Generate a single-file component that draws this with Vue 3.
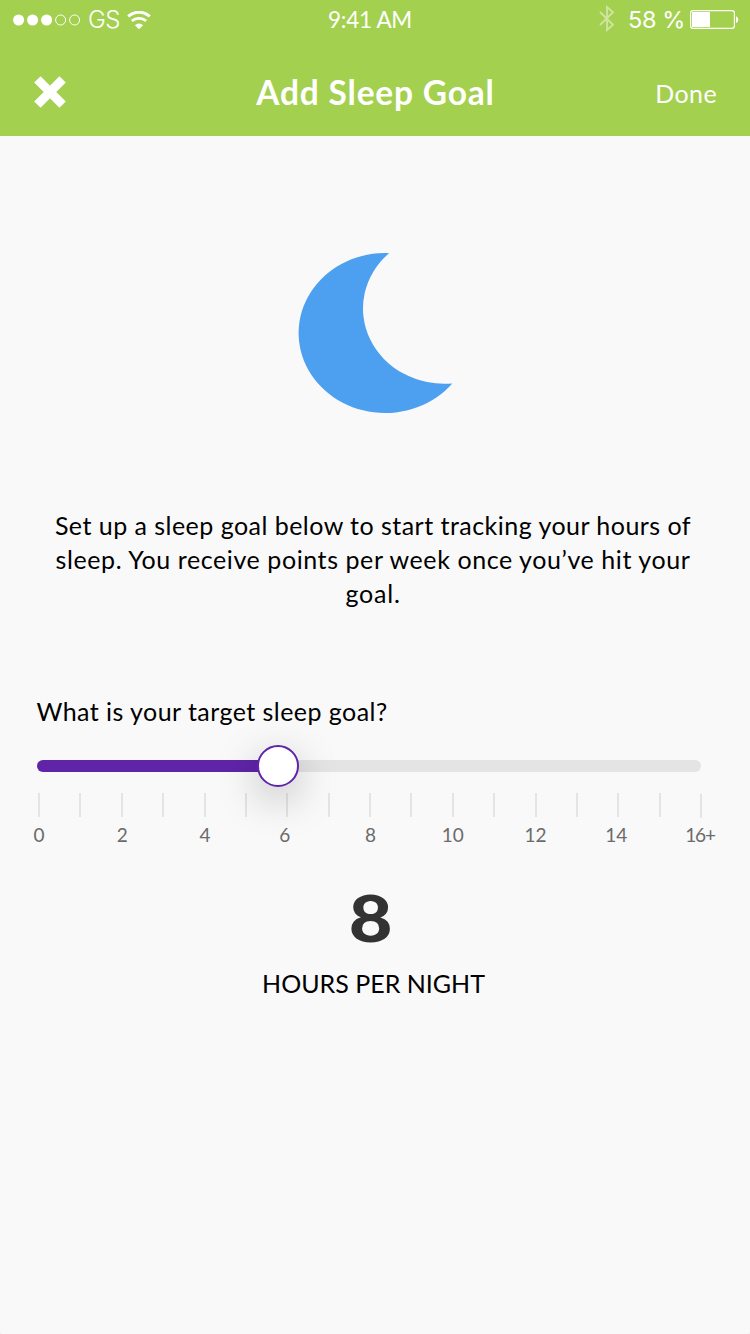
<script setup>
const signal = [true, true, true, false, false]
const ticks = Array.from({ length: 17 }, (_, i) => i)
const labels = [
  { text: '0', nudge: 0 },
  { text: '2', nudge: 0.5 },
  { text: '4', nudge: 0.5 },
  { text: '6', nudge: -2.5 },
  { text: '8', nudge: 0.5 },
  { text: '10', nudge: 0 },
  { text: '12', nudge: 0 },
  { text: '14', nudge: -2 },
  { text: '16+', nudge: -1 },
]
const progress = 36.3
</script>

<template>
  <div class="screen">
    <header class="top">
      <div class="status">
        <div class="carrier">
          <svg class="dots" width="68" height="12" viewBox="0 0 68 12">
            <circle
              v-for="(on, i) in signal"
              :key="i"
              :cx="5.6 + i * 14"
              cy="6"
              :r="on ? 5.5 : 5"
              :fill="on ? '#fff' : 'none'"
              :stroke="on ? 'none' : '#fff'"
            />
          </svg>
          <span class="network">GS</span>
          <svg class="wifi" width="24" height="19" viewBox="0 0 24 19">
            <path d="M1.2 5.4a16 16 0 0 1 21.6 0" fill="none" stroke="#fff" stroke-width="3" />
            <path d="M4.9 10.1a10.4 10.4 0 0 1 14.2 0" fill="none" stroke="#fff" stroke-width="2.8" />
            <path d="M12 18.3L7.9 14.2a5.9 5.9 0 0 1 8.2 0z" fill="#fff" />
          </svg>
        </div>
        <span class="time">9:41 AM</span>
        <div class="power">
          <svg class="bluetooth" width="16" height="27" viewBox="0 0 16 27">
            <path d="M1 7l13 12.8-6 5.2V2l6 5.2L1 20" fill="none" stroke="#fff" stroke-width="1.9" />
          </svg>
          <span class="percent">58 %</span>
          <svg class="battery" width="50" height="20" viewBox="0 0 50 20">
            <rect x=".6" y=".6" width="43.8" height="17.8" rx="2.4" fill="none" stroke="#fff" stroke-width="1.2" />
            <rect x="2" y="2" width="18" height="15" rx=".6" fill="#fff" />
            <path d="M46 6.2a3 3.5 0 0 1 0 6.8z" fill="#fff" />
          </svg>
        </div>
      </div>
      <nav class="bar">
        <svg class="close" width="32" height="32" viewBox="0 0 32 32">
          <path d="M3.4 3.4l25.2 25.2M28.6 3.4L3.4 28.6" stroke="#fff" stroke-width="9" />
        </svg>
        <h1 class="title">Add Sleep Goal</h1>
        <span class="done">Done</span>
      </nav>
    </header>

    <main class="content">
      <svg class="moon" width="156" height="162" viewBox="298 252 156 162">
        <path d="M389.2 253.1A86.5 80 0 1 0 452.3 383.4A81.3 75.3 0 0 1 389.2 253.1z" fill="#4d9ff0" />
      </svg>

      <p class="intro">
        <span class="l1">Set up a sleep goal below to start tracking your hours of</span>
        <span class="l2">sleep. You receive points per week once you’ve hit your</span>
        <span class="l3">goal.</span>
      </p>

      <section class="goal">
        <h2 class="question">What is your target sleep goal?</h2>
        <div class="track">
          <div class="fill" :style="{ width: progress + '%' }"></div>
          <div class="knob" :style="{ left: progress + '%' }"></div>
        </div>
        <div class="ticks"><i v-for="t in ticks" :key="t"></i></div>
        <div class="labels">
          <span v-for="l in labels" :key="l.text">
            <b :style="{ marginLeft: l.nudge * 2 + 'px' }">{{ l.text }}</b>
          </span>
        </div>
      </section>

      <div class="value">8</div>
      <div class="unit">HOURS PER NIGHT</div>
    </main>
  </div>
</template>

<style>
html {
  background: #efefef;
}
</style>

<style scoped>
.screen {
  width: 750px;
  height: 1334px;
  overflow: hidden;
  background: #f9f9f9;
  border-radius: 0 0 3px 3px;
  color: #000;
  font-family: Lato, "Liberation Sans", sans-serif;
}
.top {
  height: 136px;
  background: #a4d04f;
  color: #fff;
}
.status {
  height: 40px;
  display: grid;
  grid-template-columns: 1fr auto 1fr;
  align-items: center;
  padding: 0 10px 0 13px;
  line-height: 38px;
}
.time {
  margin-right: 13px;
  font-size: 22.5px;
  letter-spacing: -0.3px;
}
.carrier,
.power {
  display: flex;
  align-items: center;
}
.network {
  margin-left: 7px;
  font: 300 24px/38px Inter, sans-serif;
  letter-spacing: -0.6px;
}
.wifi {
  margin-left: 7px;
}
.power {
  justify-content: flex-end;
}
.bluetooth {
  margin-bottom: 3px;
  opacity: 0.45;
}
.percent {
  margin-left: 13px;
  font: 400 23.5px/38px Inter, sans-serif;
  letter-spacing: -0.4px;
}
.battery {
  margin-left: 5px;
}
.bar {
  height: 96px;
  display: grid;
  grid-template-columns: 1fr auto 1fr;
  align-items: center;
  padding: 0 33px 0 34px;
}
.close {
  margin-top: 8px;
}
.title {
  margin: 0;
  padding-top: 8px;
  font-size: 33.5px;
  font-weight: 700;
  line-height: 40px;
  letter-spacing: 0.8px;
}
.done {
  justify-self: end;
  padding-top: 9px;
  font-size: 25px;
  letter-spacing: 0.4px;
}
.content {
  display: flex;
  flex-direction: column;
  align-items: center;
}
.moon {
  margin: 116px 0 0 2px;
}
.intro {
  margin: 94px 4px 0 0;
  display: flex;
  flex-direction: column;
  align-items: center;
  font-size: 25px;
  line-height: 34px;
  white-space: nowrap;
}
.l1 {
  letter-spacing: 0.47px;
}
.l2 {
  letter-spacing: 0.58px;
}
.l3 {
  letter-spacing: 0.8px;
}
.goal {
  width: 664px;
  margin-top: 83px;
  margin-right: 13px;
}
.question {
  margin: 0;
  font-size: 25px;
  font-weight: 400;
  line-height: 36px;
  letter-spacing: 0.45px;
}
.track {
  position: relative;
  height: 12px;
  margin: 31px 0 0;
  border-radius: 6px;
  background: #e4e4e4;
}
.fill {
  height: 12px;
  border-radius: 6px;
  background: #6024a8;
}
.knob {
  position: absolute;
  top: -15px;
  width: 42px;
  height: 42px;
  margin-left: -21px;
  box-sizing: border-box;
  border: 2px solid #6024a8;
  border-radius: 50%;
  background: #fff;
  box-shadow: 0 12px 40px rgba(0, 0, 0, 0.25);
}
.ticks {
  display: flex;
  justify-content: space-between;
  margin: 21px -1.5px 0 1.5px;
}
.ticks i {
  width: 2px;
  height: 24px;
  background: #e4e4e4;
}
.ticks i:last-child {
  margin-top: 1px;
  margin-bottom: -1px;
}
.labels {
  display: flex;
  justify-content: space-between;
  margin: 6px -0.5px 0 2.5px;
  color: #6b6b6b;
  font-size: 19px;
  line-height: 24px;
}
.labels span {
  width: 0;
  display: flex;
  justify-content: center;
}
.labels b {
  font-weight: 400;
}
.labels span:last-child b {
  letter-spacing: -1.2px;
}
.value {
  margin: 30px 8px 0 0;
  color: #333;
  font-size: 68px;
  font-weight: 900;
  line-height: 80px;
  transform: scale(1.11, 0.96);
}
.unit {
  margin: 8px 3px 0 0;
  font-size: 25px;
  line-height: 36px;
}
</style>
